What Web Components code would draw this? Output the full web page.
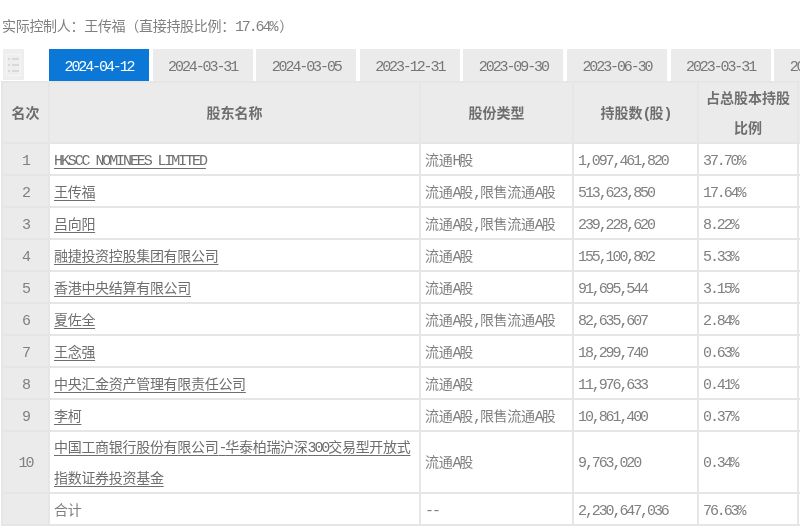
<!DOCTYPE html>
<html lang="zh">
<head>
<meta charset="utf-8">
<title>十大股东</title>
<style>
  html, body { margin: 0; background: #fff; }
  body { font-family: "Noto Sans CJK SC", "Liberation Sans", sans-serif; }
  holder-panel .n {
    font-family: "Liberation Mono", monospace;
    font-size: 15px;
    letter-spacing: -2.1px;
    line-height: 0;
    margin-right: 3px;
  }
</style>
</head>
<body>
<holder-panel>
  <span slot="title">实际控制人：王传福（直接持股比例：<span class="n">17.64%</span>）</span>
</holder-panel>

<script>
// half width latin in the reference, so latin runs get their own mono span
const latin = (s) => s.replace(/[\x20-\x7e]+/g, (m) => `<i class="n">${m}</i>`);

const monoCss = `
  .n {
    font-family: "Liberation Mono", monospace;
    font-size: 15px;
    font-style: normal;
    letter-spacing: -2.1px;
    line-height: 0;
  }
`;

class DateTabs extends HTMLElement {
  constructor() {
    super();
    this.attachShadow({ mode: 'open' });
  }

  connectedCallback() {
    const fechas = this.getAttribute('dates').split(',');
    this.shadowRoot.innerHTML = `
    <style>
      ${monoCss}
      :host { display: flex; height: 32px; overflow: hidden; }
      .icon {
        flex: none;
        width: 21px;
        height: 31px;
        margin: 0 25px 0 3px;
        background: #eeeeee;
        display: flex;
        align-items: center;
        justify-content: center;
      }
      .tab {
        flex: none;
        width: 100px;
        margin-right: 3.6px;
        background: #ebebeb;
        color: #777;
        font-size: 14px;
        line-height: 32px;
        text-align: center;
      }
      .tab.on { background: #0b78d8; color: #fff; }
    </style>
    <div class="icon">
      <svg width="15" height="22" viewBox="0 0 15 22" fill="none" stroke="#d2d2d2" stroke-width="1.5">
        <rect x="0.5" y="0.5" width="14" height="21" stroke="#f6f6f6" stroke-width="1"/>
        <path d="M2 5h2M6 5h7M2 11h2M6 11h7M2 17h2M6 17h7"/>
      </svg>
    </div>
    ${fechas.map((f, i) => `<div class="tab ${i === 0 ? 'on' : ''}">${latin(f)}</div>`).join('')}
    `;
  }
}

class HolderTable extends HTMLElement {
  constructor() {
    super();
    this.attachShadow({ mode: 'open' });
  }

  set rows(filas) {
    this.shadowRoot.innerHTML = `
    <style>
      ${monoCss}
      :host { display: block; overflow: hidden; padding-left: 1px; }
      table {
        border-collapse: collapse;
        table-layout: fixed;
        width: 900px;
        font-size: 14px;
        line-height: 30px;
        letter-spacing: -0.3px;
        color: #808080;
      }
      th, td {
        border: 2px solid #e6e6e6;
        padding: 0 4px;
        height: 30px;
        font-weight: normal;
        word-break: break-all;
      }
      th {
        background: #ebebeb;
        color: #6e6e6e;
        font-weight: 700;
        line-height: 29.5px;
        height: 59px;
        text-align: center;
        letter-spacing: 0;
      }
      td.rank { background: #ebebeb; text-align: center; padding: 0; }
      tr.two td { padding-bottom: 3px; }
      tr.two td.name { padding-bottom: 0; }
      .name div { line-height: 31px; margin: -1px 0; }
      a {
        color: #6e6e6e;
        text-decoration: underline;
        text-underline-offset: 3px;
        text-decoration-thickness: 1.4px;
      }
    </style>
    <table>
      <colgroup>
        <col style="width:47px"><col style="width:371px"><col style="width:153px">
        <col style="width:125px"><col style="width:100px"><col>
      </colgroup>
      <tr>
        <th>名次</th><th>股东名称</th><th>股份类型</th>
        <th>${latin('持股数(股)')}</th><th>占总股本持股比例</th><th></th>
      </tr>
      ${filas.map((f) => {
        const largo = f[1].length > 30;
        const enlace = `<a>${latin(f[1])}</a>`;
        return `
      <tr class="${largo ? 'two' : ''}">
        <td class="rank">${latin(f[0])}</td>
        <td class="name">${!f[0] ? f[1] : largo ? `<div>${enlace}</div>` : enlace}</td>
        <td>${latin(f[2])}</td>
        <td>${latin(f[3])}</td>
        <td>${latin(f[4])}</td>
        <td></td>
      </tr>`;
      }).join('')}
    </table>
    `;
  }
}

class HolderPanel extends HTMLElement {
  constructor() {
    super();
    this.attachShadow({ mode: 'open' });
  }

  connectedCallback() {
    this.shadowRoot.innerHTML = `
    <style>
      :host { display: block; width: 800px; height: 531px; overflow: hidden; filter: blur(0.45px); }
      .title {
        height: 49px;
        box-sizing: border-box;
        padding: 15px 0 0 2px;
        font-size: 14px;
        line-height: 20px;
        letter-spacing: -0.3px;
        color: #808080;
      }
    </style>
    <div class="title"><slot name="title"></slot></div>
    <date-tabs dates="2024-04-12,2024-03-31,2024-03-05,2023-12-31,2023-09-30,2023-06-30,2023-03-31,2022-12-31"></date-tabs>
    <holder-table></holder-table>
    `;
    this.shadowRoot.querySelector('holder-table').rows = [
      ['1', 'HKSCC NOMINEES LIMITED', '流通H股', '1,097,461,820', '37.70%'],
      ['2', '王传福', '流通A股,限售流通A股', '513,623,850', '17.64%'],
      ['3', '吕向阳', '流通A股,限售流通A股', '239,228,620', '8.22%'],
      ['4', '融捷投资控股集团有限公司', '流通A股', '155,100,802', '5.33%'],
      ['5', '香港中央结算有限公司', '流通A股', '91,695,544', '3.15%'],
      ['6', '夏佐全', '流通A股,限售流通A股', '82,635,607', '2.84%'],
      ['7', '王念强', '流通A股', '18,299,740', '0.63%'],
      ['8', '中央汇金资产管理有限责任公司', '流通A股', '11,976,633', '0.41%'],
      ['9', '李柯', '流通A股,限售流通A股', '10,861,400', '0.37%'],
      ['10', '中国工商银行股份有限公司-华泰柏瑞沪深300交易型开放式指数证券投资基金', '流通A股', '9,763,020', '0.34%'],
      ['', '合计', '--', '2,230,647,036', '76.63%'],
    ];
  }
}

customElements.define('date-tabs', DateTabs);
customElements.define('holder-table', HolderTable);
customElements.define('holder-panel', HolderPanel);
</script>
</body>
</html>
